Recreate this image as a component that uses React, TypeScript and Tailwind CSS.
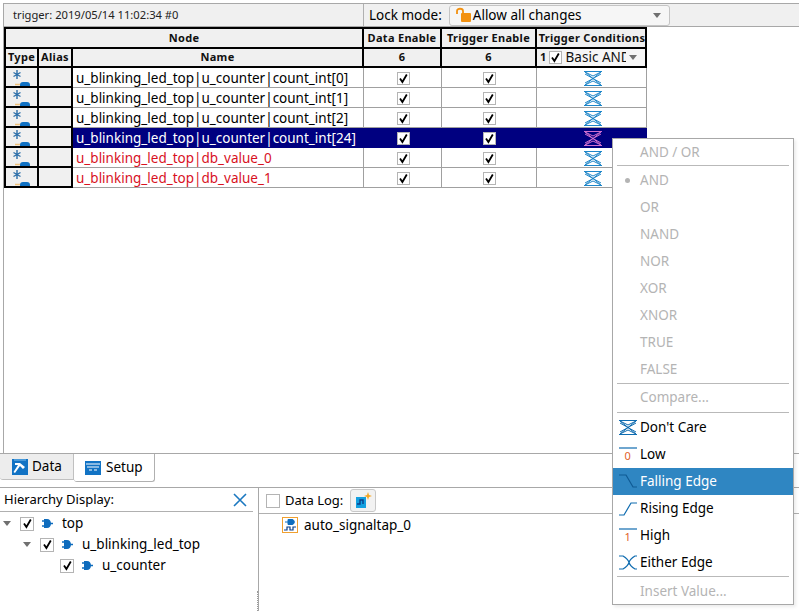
import { FC, ReactNode } from 'react';

const rows = [
  { name: 'u_blinking_led_top|u_counter|count_int[0]' },
  { name: 'u_blinking_led_top|u_counter|count_int[1]' },
  { name: 'u_blinking_led_top|u_counter|count_int[2]' },
  { name: 'u_blinking_led_top|u_counter|count_int[24]', selected: true },
  { name: 'u_blinking_led_top|db_value_0', red: true },
  { name: 'u_blinking_led_top|db_value_1', red: true },
];

const logicItems = ['AND', 'OR', 'NAND', 'NOR', 'XOR', 'XNOR', 'TRUE', 'FALSE'];

const Check: FC<{ className?: string }> = ({ className = '' }) => (
  <span className={`flex h-[13px] w-[13px] items-center justify-center border border-[#b4b4b4] bg-white ${className}`}>
    <svg width="11" height="11" viewBox="0 0 11 11">
      <path d="M2 5.5 L4.4 9 L8.8 1.5" fill="none" stroke="#000" strokeWidth="1.8" />
    </svg>
  </span>
);

const DontCare: FC<{ color?: string; className?: string }> = ({ color = '#1f86c8', className = '' }) => (
  <svg width="18" height="15" viewBox="0 0 18 15" className={className}>
    <path d="M0 .5 H18 M0 14.5 H18" fill="none" stroke={color} strokeWidth="1.2" />
    <path d="M1 1 L17 14 M17 1 L1 14 M1 3 L9 7.5 L17 3 M1 12 L9 7.5 L17 12 M1 1 L9 5 L17 1 M1 14 L9 10 L17 14" fill="none" stroke={color} strokeWidth="1" />
  </svg>
);

const TypeIcon = () => (
  <svg width="31" height="18" viewBox="0 0 31 18" className="block">
    <path d="M11 2 V11 M7.5 4.5 L14.5 8.5 M14.5 4.5 L7.5 8.5" stroke="#2b6ea8" strokeWidth="1.4" />
    <path d="M9 16.5 H15" stroke="#f0c27a" strokeWidth="1.5" />
    <rect x="14" y="14" width="10" height="6" rx="3" fill="#0f71c4" />
  </svg>
);

const Plug = () => (
  <svg width="11" height="9" viewBox="0 0 11 9">
    <path d="M0 2 H3 M0 7 H3 M8 4.5 H11" stroke="#0f6cbd" strokeWidth="1.5" />
    <path d="M2 0 H5 C7.5 0 9 2 9 4.5 C9 7 7.5 9 5 9 H2 Z" fill="#0f6cbd" />
  </svg>
);

const Arrow: FC<{ className?: string }> = ({ className = '' }) => (
  <span className={`h-0 w-0 border-x-[4px] border-t-[5px] border-x-transparent border-t-[#707070] ${className}`} />
);

const HeadCell: FC<{ children?: ReactNode; className?: string }> = ({ children, className = '' }) => (
  <div className={`flex items-center justify-center whitespace-nowrap border-b-2 border-r-2 border-black bg-[#f0f0f0] text-[11px] font-bold tracking-[0.3px] text-[#111] ${className}`}>
    {children}
  </div>
);

const TableRow: FC<{ name: string; selected?: boolean; red?: boolean }> = ({ name, selected, red }) => {
  const bg = selected ? 'bg-[#000080]' : 'bg-white';
  const text = selected ? 'text-white' : red ? 'text-[#d8121f]' : 'text-black';
  const line = selected ? 'border-[#000080]' : 'border-[#a0a0a0]';
  return (
    <>
      <div className="overflow-hidden border-b-2 border-r-2 border-black bg-[#f0f0f0]">
        <TypeIcon />
      </div>
      <div className="border-b-2 border-r-2 border-black bg-[#f0f0f0]" />
      <div className={`flex items-center border-b border-r px-[3px] pt-px text-[13.5px] ${bg} ${text} ${line}`}>{name}</div>
      <div className={`flex items-center justify-center border-b border-r pl-px pt-px ${bg} ${line}`}>
        <Check />
      </div>
      <div className={`flex items-center justify-center border-b border-r pl-px pt-px ${bg} ${line}`}>
        <Check />
      </div>
      <div className={`flex items-center justify-center border-b border-r pl-[2px] pt-px ${bg} ${line}`}>
        <DontCare color={selected ? '#d070d0' : '#1f86c8'} />
      </div>
    </>
  );
};

const MenuSep: FC<{ className?: string }> = ({ className = '' }) => <div className={`mx-[4px] h-px shrink-0 bg-[#b9b9b9] ${className}`} />;

const MenuItem: FC<{ label: string; disabled?: boolean; active?: boolean; icon?: ReactNode; bullet?: boolean; className?: string }> = ({
  label,
  disabled,
  active,
  icon,
  bullet,
  className = 'h-[27px]',
}) => (
  <div
    className={`flex shrink-0 items-center text-[13.5px] ${className} ${
      active ? 'bg-[#2f86c2] text-white' : disabled ? 'text-[#b4b4b4]' : 'text-black'
    }`}
  >
    <span className="flex w-[27px] items-center justify-center pl-[2px]">
      {bullet && <span className="h-[5px] w-[5px] rounded-full bg-[#b4b4b4]" />}
      {icon}
    </span>
    {label}
  </div>
);

const EdgeIcon: FC<{ d: string; color?: string; digit?: string }> = ({ d, color = '#0f6cb0', digit }) => (
  <span className="relative flex h-[15px] w-[18px]">
    <svg width="18" height="15" viewBox="0 0 18 15">
      <path d={d} fill="none" stroke={color} strokeWidth="1.2" />
    </svg>
    {digit && <span className="absolute left-[6px] top-[2px] text-[11px] leading-[14px] text-[#e2611f]">{digit}</span>}
  </span>
);

const TreeRow: FC<{ label: string; indent: string; arrow?: boolean }> = ({ label, indent, arrow }) => (
  <div className={`flex h-[21px] items-center text-[13.5px] ${indent}`}>
    <span className="flex w-[20px] justify-start pl-[3px]">{arrow && <Arrow />}</span>
    <Check className="h-[14px] w-[14px]" />
    <span className="ml-[8px] mr-[9px] flex">
      <Plug />
    </span>
    {label}
  </div>
);

export default function App() {
  return (
    <div className="relative flex h-[611px] w-[799px] flex-col overflow-hidden bg-white text-black [font-family:'Noto_Sans',sans-serif]">
      <div className="ml-[3px] mt-[3px] flex h-[450px] flex-col border-l border-t border-[#a8a8a8]">
        {/* toolbar */}
        <div className="flex h-[23px] shrink-0 items-center border-b border-[#a8a8a8] bg-[#f0f0f0]">
          <div className="flex h-full w-[360px] items-center border-r border-[#b0b0b0] pl-[9px] text-[11.2px] text-[#222]">
            trigger: 2019/05/14 11:02:34 #0
          </div>
          <span className="ml-[5px] text-[13.5px]">Lock mode:</span>
          <div className="ml-[7px] flex h-[21px] w-[221px] items-center rounded-[3px] border border-[#c4c4c4] bg-[#f6f6f6] pl-[5px] text-[13.5px]">
            <svg width="18" height="18" viewBox="0 0 18 18">
              <path d="M2 8 V5 C2 2 8 2 8 5 V8" fill="none" stroke="#f29111" strokeWidth="1.8" />
              <rect x="6" y="7" width="10" height="9" rx="1" fill="#f29111" />
            </svg>
            <span className="flex-1">Allow all changes</span>
            <Arrow className="mr-[8px]" />
          </div>
        </div>
        {/* signal table */}
        <div className="grid w-[643px] grid-cols-[33px_34px_291px_78px_95px_110px] grid-rows-[20px_19px_repeat(6,20px)] border-l-2 border-t-2 border-black">
          <HeadCell className="col-span-3">Node</HeadCell>
          <HeadCell>Data Enable</HeadCell>
          <HeadCell>Trigger Enable</HeadCell>
          <HeadCell className="pl-[2px] tracking-[0.2px]">Trigger Conditions</HeadCell>
          <HeadCell>Type</HeadCell>
          <HeadCell>Alias</HeadCell>
          <HeadCell>Name</HeadCell>
          <HeadCell>6</HeadCell>
          <HeadCell>6</HeadCell>
          <HeadCell className="justify-start pl-[3px]">
            <span>1</span>
            <Check className="ml-[2px]" />
            <div className="flex h-full flex-1 items-center overflow-hidden rounded-[2px] bg-[#f6f6f6] pl-[4px] text-[13.5px] font-normal tracking-normal">
              <span className="mr-[3px] w-[60px] overflow-hidden whitespace-nowrap">Basic AND</span>
              <Arrow />
            </div>
          </HeadCell>
          {rows.map((r) => (
            <TableRow key={r.name} {...r} />
          ))}
        </div>
      </div>

      {/* tabs */}
      <div className="relative flex h-[35px] shrink-0 border-b border-t border-[#a8a8a8]">
        <div className="flex h-[26px] w-[74px] items-center rounded-bl-[3px] border-b border-r border-[#c0c0c0] bg-[#ededed] pl-[12px] text-[13.5px]">
          <svg width="16" height="16" viewBox="0 0 16 16">
            <rect width="16" height="16" fill="#1273c4" />
            <path d="M2 1 H14" stroke="#7fc0ee" strokeWidth="1" />
            <path d="M3 4 H8 L13 8 L11 10 L8 7 L3 14 L1.5 13 L6 6 L3 6 Z" fill="#fff" />
          </svg>
          <span className="ml-[4px]">Data</span>
        </div>
        <div className="flex h-[28px] w-[81px] items-center rounded-b-[3px] border-b border-r border-[#b0b0b0] bg-white pl-[11px] text-[13.5px]">
          <svg width="16" height="14" viewBox="0 0 16 14">
            <rect width="16" height="14" fill="#1273c4" />
            <path d="M1 3 H15 M2 6 H14 M4 9 H7 M9 9 H12" stroke="#fff" strokeWidth="1.2" />
          </svg>
          <span className="ml-[5px]">Setup</span>
        </div>
      </div>

      {/* bottom panes */}
      <div className="flex flex-1">
        <div className="w-[253px] shrink-0">
          <div className="flex h-[24px] items-center justify-between border-b border-[#b0b0b0] pl-[4px] pr-[6px] text-[13px]">
            <span>Hierarchy Display:</span>
            <svg width="14" height="14" viewBox="0 0 14 14">
              <path d="M1 1 L13 13 M13 1 L1 13" stroke="#1b78c0" strokeWidth="1.6" />
            </svg>
          </div>
          <div className="pt-px">
            <TreeRow label="top" indent="" arrow />
            <TreeRow label="u_blinking_led_top" indent="pl-[20px]" arrow />
            <TreeRow label="u_counter" indent="pl-[40px]" />
          </div>
        </div>
        <div className="ml-[2px] w-[3px] shrink-0 self-end border-r border-dotted border-[#999] pt-[20px]" />
        <div className="flex-1 border-l border-[#a8a8a8]">
          <div className="flex h-[26px] items-center border-b border-[#b0b0b0] pl-[7px] text-[13px]">
            <span className="h-[14px] w-[14px] border border-[#b4b4b4]" />
            <span className="ml-[5px]">Data Log:</span>
            <div className="ml-[7px] flex h-[23px] w-[26px] items-center justify-center rounded-[3px] border border-[#c8c8c8] bg-[#f2f2f2]">
              <svg width="18" height="17" viewBox="0 0 18 17">
                <rect x="2" y="5" width="10" height="11" fill="#14a0e0" />
                <path d="M3 12 H6 V8 H9 V12" fill="none" stroke="#0b3f8a" strokeWidth="1.4" />
                <path d="M14 0 L15 3 L18 4 L15 5 L14 8 L13 5 L10 4 L13 3 Z" fill="#f5a623" />
              </svg>
            </div>
          </div>
          <div className="flex h-[21px] items-center pl-[23px] pt-px text-[13.5px]">
            <svg width="16" height="16" viewBox="0 0 16 16">
              <rect x=".5" y=".5" width="15" height="15" fill="#fff" stroke="#f0a030" />
              <path d="M3 5 H6 M6 2.5 H10 C13 2.5 13 7.5 10 7.5 H6 Z" fill="#0f6cbd" stroke="#0f6cbd" />
              <path d="M2 13 H5 V10 H8 V13 H11 V10 H14" fill="none" stroke="#0b3f8a" strokeWidth="1.2" />
            </svg>
            <span className="ml-[6px]">auto_signaltap_0</span>
          </div>
        </div>
      </div>

      {/* context menu */}
      <div className="absolute left-[612px] top-[138px] flex h-[467px] w-[182px] flex-col border border-[#a8a8a8] bg-white shadow-[2px_2px_3px_rgba(0,0,0,0.08)]">
        <MenuItem label="AND / OR" disabled className="h-[26px]" />
        <MenuSep className="mb-px" />
        {logicItems.map((l) => (
          <MenuItem key={l} label={l} disabled bullet={l === 'AND'} />
        ))}
        <MenuSep />
        <MenuItem label="Compare..." disabled />
        <MenuSep className="my-px" />
        <MenuItem label="Don't Care" icon={<DontCare color="#0f6cb0" />} />
        <MenuItem label="Low" icon={<EdgeIcon d="M0 1 H18" digit="0" />} />
        <MenuItem label="Falling Edge" active icon={<EdgeIcon d="M0 1 H7 L14 13 H18" color="#0f5a94" />} />
        <MenuItem label="Rising Edge" icon={<EdgeIcon d="M0 14 H5 L12 2 H18" />} />
        <MenuItem label="High" icon={<EdgeIcon d="M0 1 H18" digit="1" />} />
        <MenuItem label="Either Edge" icon={<EdgeIcon d="M0 1 H4 Q9 4 10 7.5 Q11 11 16 14 H18 M0 14 H4 Q9 11 10 7.5 Q11 4 16 1 H18" />} />
        <MenuSep className="mb-px" />
        <MenuItem label="Insert Value..." disabled className="h-[26px]" />
      </div>
    </div>
  );
}
